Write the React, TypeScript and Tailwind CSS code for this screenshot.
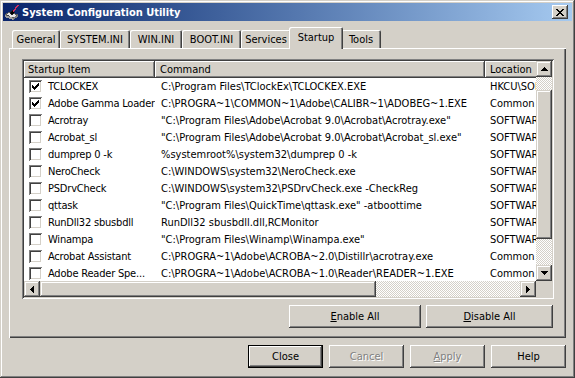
import React from "react";

const RAISED =
  "shadow-[inset_-1px_-1px_#404040,inset_1px_1px_#ffffff,inset_-2px_-2px_#808080,inset_2px_2px_#d4d0c8]";
const SCROLLBTN =
  "shadow-[inset_-1px_-1px_#404040,inset_1px_1px_#d4d0c8,inset_-2px_-2px_#808080,inset_2px_2px_#ffffff]";
const CHECKER =
  "bg-[repeating-conic-gradient(#d4d0c8_0%_25%,#ffffff_0%_50%)] bg-[length:2px_2px]";

type Row = [boolean, string, string, string];
const RUN = "SOFTWARE\\Microsoft\\Windows\\CurrentVersion\\Run";
const rows: Row[] = [
  [true, "TCLOCKEX", "C:\\Program Files\\TClockEx\\TCLOCKEX.EXE", "HKCU\\SOFTWARE\\Microsoft\\Windows\\CurrentVersion\\Run"],
  [true, "Adobe Gamma Loader", "C:\\PROGRA~1\\COMMON~1\\Adobe\\CALIBR~1\\ADOBEG~1.EXE", "Common Startup"],
  [false, "Acrotray", "\"C:\\Program Files\\Adobe\\Acrobat 9.0\\Acrobat\\Acrotray.exe\"", RUN],
  [false, "Acrobat_sl", "\"C:\\Program Files\\Adobe\\Acrobat 9.0\\Acrobat\\Acrobat_sl.exe\"", RUN],
  [false, "dumprep 0 -k", "%systemroot%\\system32\\dumprep 0 -k", RUN],
  [false, "NeroCheck", "C:\\WINDOWS\\system32\\NeroCheck.exe", RUN],
  [false, "PSDrvCheck", "C:\\WINDOWS\\system32\\PSDrvCheck.exe -CheckReg", RUN],
  [false, "qttask", "\"C:\\Program Files\\QuickTime\\qttask.exe\" -atboottime", RUN],
  [false, "RunDll32 sbusbdll", "RunDll32 sbusbdll.dll,RCMonitor", RUN],
  [false, "Winampa", "\"C:\\Program Files\\Winamp\\Winampa.exe\"", RUN],
  [false, "Acrobat Assistant", "C:\\PROGRA~1\\Adobe\\ACROBA~2.0\\Distillr\\acrotray.exe", "Common Startup"],
  [false, "Adobe Reader Spe...", "C:\\PROGRA~1\\Adobe\\ACROBA~1.0\\Reader\\READER~1.EXE", "Common Startup"],
];

function Checkbox({ checked }: { checked: boolean }) {
  return (
    <div className="w-[13px] h-[13px] shrink-0 bg-white shadow-[inset_1px_1px_#808080,inset_-1px_-1px_#ffffff,inset_2px_2px_#404040,inset_-2px_-2px_#d4d0c8] flex items-center justify-center">
      {checked && (
        <svg width="7" height="7" viewBox="0 0 7 7" shapeRendering="crispEdges">
          <path d="M0 2h1v3h-1zM1 3h1v3h-1zM2 4h1v3h-1zM3 3h1v3h-1zM4 2h1v3h-1zM5 1h1v3h-1zM6 0h1v3h-1z" fill="#000" />
        </svg>
      )}
    </div>
  );
}

function Tab({ label, w, selected }: { label: string; w: number; selected?: boolean }) {
  if (selected) {
    return (
      <div
        className="relative z-10 -mx-[2px] -mb-[1px] h-[22px] bg-[#d4d0c8] shadow-[inset_1px_1px_#ffffff,inset_-1px_0_#404040,inset_-2px_0_#808080] rounded-t-[2px] flex items-start justify-center pt-[4px]"
        style={{ width: w + 4 }}
      >
        {label}
      </div>
    );
  }
  return (
    <div
      className="h-[18px] bg-[#d4d0c8] shadow-[inset_1px_1px_#ffffff,inset_-1px_0_#404040,inset_-2px_0_#808080] rounded-t-[2px] flex items-start justify-center pt-[3px]"
      style={{ width: w }}
    >
      {label}
    </div>
  );
}

function Button({
  children,
  w,
  def,
  disabled,
}: {
  children: React.ReactNode;
  w: number;
  def?: boolean;
  disabled?: boolean;
}) {
  return (
    <div className={`h-[23px] ${def ? "border border-black" : ""}`} style={{ width: w }}>
      <div
        className={`h-full w-full flex items-center justify-center ${RAISED} ${
          disabled ? "text-[#808080] [text-shadow:1px_1px_#ffffff]" : "text-black"
        }`}
      >
        {children}
      </div>
    </div>
  );
}

function ArrowBtn({ dir }: { dir: "up" | "down" | "left" | "right" }) {
  const paths: Record<string, string> = {
    up: "M3.5 0L7 4H0z",
    down: "M0 0h7L3.5 4z",
    left: "M4 0v7L0 3.5z",
    right: "M0 0l4 3.5L0 7z",
  };
  const vert = dir === "up" || dir === "down";
  return (
    <div className={`w-[16px] h-[16px] shrink-0 bg-[#d4d0c8] ${SCROLLBTN} flex items-center justify-center`}>
      <svg width={vert ? 7 : 4} height={vert ? 4 : 7} viewBox={vert ? "0 0 7 4" : "0 0 4 7"} shapeRendering="crispEdges">
        <path d={paths[dir]} fill="#000" />
      </svg>
    </div>
  );
}

function TitleIcon() {
  return (
    <svg width="16" height="16" viewBox="0 0 16 16" shapeRendering="crispEdges">
      <path d="M1 11l5-3 8 3-5 3z" fill="#e8e8e8" stroke="#606060" strokeWidth="1" />
      <path d="M1 11v2l8 3v-2z" fill="#a0a0a0" />
      <path d="M9 14v2l5-3v-2z" fill="#808080" />
      <path d="M5 9l3-3 3 3-3 2z" fill="#202020" />
      <path d="M9 8l5-7" stroke="#d03060" strokeWidth="1.5" />
      <path d="M7 10l2-2" stroke="#000" strokeWidth="1.5" />
      <rect x="3" y="11" width="2" height="1" fill="#404040" />
    </svg>
  );
}

export default function App() {
  return (
    <div className="w-[575px] h-[378px] bg-[#d4d0c8] p-[3px] flex flex-col text-[11px] leading-[13px] text-black font-['DejaVu_Sans_Condensed','DejaVu_Sans',sans-serif] [font-stretch:condensed] shadow-[inset_-1px_-1px_#404040,inset_1px_1px_#d4d0c8,inset_-2px_-2px_#808080,inset_2px_2px_#ffffff] overflow-hidden select-none">
      {/* Title bar */}
      <div className="h-[18px] shrink-0 flex items-center bg-gradient-to-r from-[#0a246a] to-[#a6caf0]">
        <div className="ml-[1px] w-[16px] h-[16px]">
          <TitleIcon />
        </div>
        <div className="ml-[2px] text-white font-bold">System Configuration Utility</div>
        <div className="ml-auto mr-[4px] w-[16px] h-[14px] bg-[#d4d0c8] shadow-[inset_-1px_-1px_#404040,inset_1px_1px_#ffffff,inset_-2px_-2px_#808080,inset_2px_2px_#d4d0c8] flex items-center justify-center">
          <svg width="8" height="7" viewBox="0 0 8 7" shapeRendering="crispEdges">
            <path d="M0 0h2v1h-2zM6 0h2v1h-2zM1 1h2v1h-2zM5 1h2v1h-2zM2 2h4v1h-4zM3 3h2v1h-2zM2 4h4v1h-4zM1 5h2v1h-2zM5 5h2v1h-2zM0 6h2v1h-2zM6 6h2v1h-2z" fill="#000" />
          </svg>
        </div>
      </div>

      {/* Tabs */}
      <div className="h-[27px] shrink-0 flex items-end pl-[9px]">
        <Tab label="General" w={48} />
        <Tab label="SYSTEM.INI" w={70} />
        <Tab label="WIN.INI" w={52} />
        <Tab label="BOOT.INI" w={59} />
        <Tab label="Services" w={50} />
        <Tab label="Startup" w={50} selected />
        <Tab label="Tools" w={40} />
      </div>

      {/* Panel */}
      <div className="mx-[6px] h-[290px] shrink-0 shadow-[inset_1px_1px_#ffffff,inset_-1px_-1px_#404040,inset_-2px_-2px_#808080] pt-[11px] pl-[13px] pr-[12px] flex flex-col">
        {/* List view */}
        <div className="w-[532px] h-[240px] bg-white p-[2px] shadow-[inset_1px_1px_#808080,inset_-1px_-1px_#ffffff,inset_2px_2px_#404040,inset_-2px_-2px_#d4d0c8] flex flex-col">
          <div className="flex h-[220px]">
            <div className="w-[512px] h-[220px] overflow-hidden">
              <div className="flex h-[17px] w-[700px]">
                <div className={`w-[131px] h-[17px] bg-[#d4d0c8] ${RAISED} pl-[4px] flex items-center`}>Startup Item</div>
                <div className={`w-[330px] h-[17px] bg-[#d4d0c8] ${RAISED} pl-[5px] flex items-center`}>Command</div>
                <div className={`w-[200px] h-[17px] bg-[#d4d0c8] ${RAISED} pl-[5px] flex items-center`}>Location</div>
              </div>
              {rows.map((r, i) => (
                <div key={i} className="flex h-[17px] w-[700px] items-center whitespace-nowrap">
                  <div className="w-[131px] flex items-center pl-[5px] gap-[6px] overflow-hidden">
                    <Checkbox checked={r[0]} />
                    <span className="tracking-[-0.2px]">{r[1]}</span>
                  </div>
                  <div className="w-[330px] pl-[6px] overflow-hidden">{r[2]}</div>
                  <div className="w-[200px] pl-[5px] overflow-hidden">{r[3]}</div>
                </div>
              ))}
            </div>
            <div className="w-[16px] h-[220px] flex flex-col">
              <ArrowBtn dir="up" />
              <div className={`flex-1 flex flex-col ${CHECKER}`}>
                <div className="h-[13px]" />
                <div className={`h-[149px] bg-[#d4d0c8] ${SCROLLBTN}`} />
              </div>
              <ArrowBtn dir="down" />
            </div>
          </div>
          <div className="flex h-[16px]">
            <div className="w-[512px] flex">
              <ArrowBtn dir="left" />
              <div className={`flex-1 flex ${CHECKER}`}>
                <div className={`w-[336px] h-[16px] bg-[#d4d0c8] ${SCROLLBTN}`} />
              </div>
              <ArrowBtn dir="right" />
            </div>
            <div className="w-[16px] h-[16px] bg-[#d4d0c8]" />
          </div>
        </div>

        <div className="mt-[6px] flex justify-end gap-[5px] pr-[1px]">
          <Button w={132}>
            <span>
              <u>E</u>nable All
            </span>
          </Button>
          <Button w={127}>
            <span>
              <u>D</u>isable All
            </span>
          </Button>
        </div>
      </div>

      <div className="mt-[7px] flex justify-end gap-[6px] mr-[6px]">
        <Button w={75} def>
          Close
        </Button>
        <Button w={75} disabled>
          Cancel
        </Button>
        <Button w={75} disabled>
          <span>
            <u>A</u>pply
          </span>
        </Button>
        <Button w={75}>Help</Button>
      </div>
    </div>
  );
}
